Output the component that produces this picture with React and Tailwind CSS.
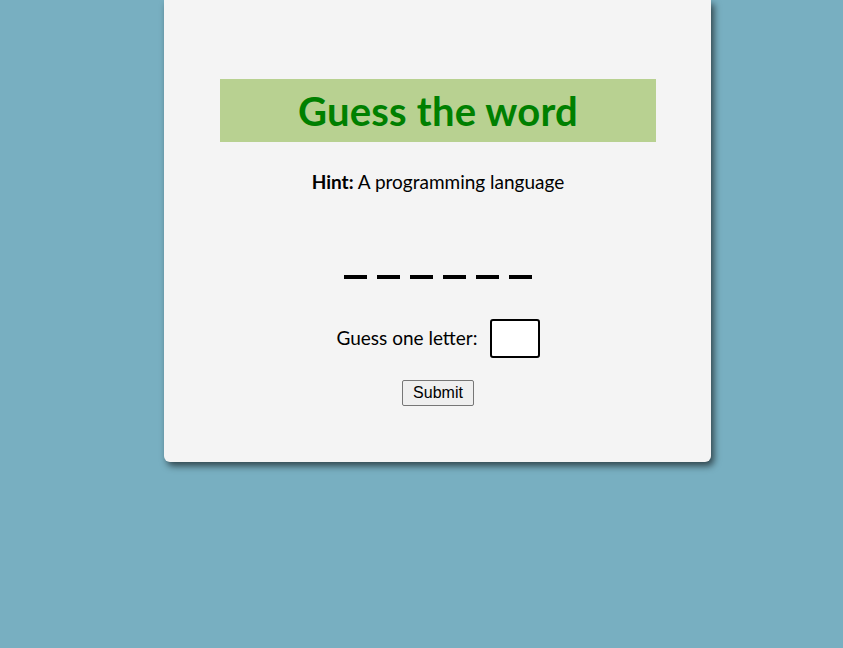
export default function App() {
  return (
    <div className="min-h-[648px] w-full bg-[#78afc1] overflow-hidden" style={{ fontFamily: '"Gill Sans", Lato, "Open Sans", sans-serif' }}>
      <div className="ml-[164px] w-[547px] h-[462px] bg-[#f4f4f4] rounded-b-[6px] shadow-[3px_4px_7px_rgba(0,0,0,0.6)] pl-[56px] pr-[55px] pt-[79px] flex flex-col items-center">
        <div className="w-[436px] h-[63px] bg-[#b8d191] flex items-center justify-center">
          <h1 className="text-[40px] font-bold text-[#008000] leading-none tracking-[0.2px]">Guess the word</h1>
        </div>
        <p className="mt-[30px] text-[19px] text-black leading-none">
          <span className="font-bold">Hint:</span> A programming language
        </p>
        <div className="mt-[84px] flex gap-[10px]">
          {[0, 1, 2, 3, 4, 5].map((i) => (
            <span key={i} className="block w-[23px] h-[4px] bg-black" />
          ))}
        </div>
        <div className="mt-[40px] flex items-center gap-[12px]">
          <label className="text-[19px] text-black">Guess one letter:</label>
          <input className="w-[50px] h-[39px] border-2 border-black rounded-[3px] bg-white" />
        </div>
        <button
          className="mt-[22px] h-[26px] px-[10px] bg-[#efefef] border border-[#767676] rounded-[2px] text-[16px] text-black leading-none"
          style={{ fontFamily: '"Liberation Sans", Arial, sans-serif' }}
        >
          Submit
        </button>
      </div>
    </div>
  );
}
